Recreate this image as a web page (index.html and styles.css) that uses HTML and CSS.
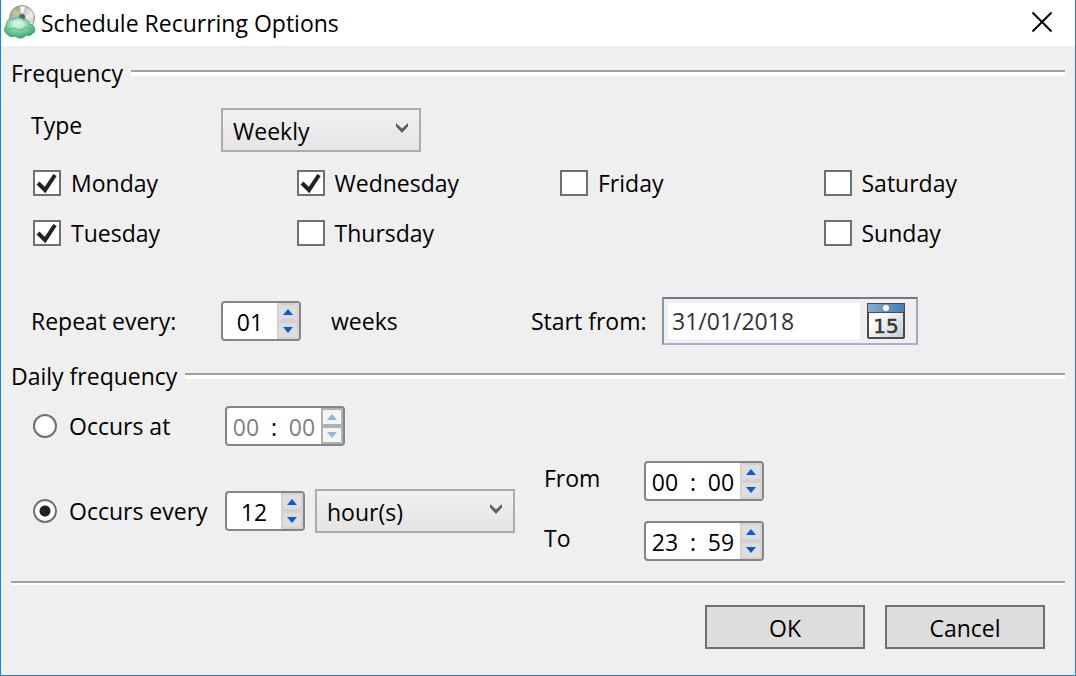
FILE: index.html
```html
<!DOCTYPE html>
<html lang="en">
<head>
<meta charset="utf-8">
<title>Schedule Recurring Options</title>
<link rel="stylesheet" href="styles.css">
</head>
<body>
<form class="dialog">
  <header class="titlebar">
    <svg class="app-icon" width="32" height="34" viewBox="0 0 32 34" aria-hidden="true">
      <defs>
        <linearGradient id="disc" x1="0" y1="0" x2="1" y2="1">
          <stop offset="0" stop-color="#858585"/><stop offset=".35" stop-color="#bcbcbc"/>
          <stop offset=".6" stop-color="#ededed"/><stop offset="1" stop-color="#a8a8a8"/>
        </linearGradient>
        <radialGradient id="cloud" cx=".45" cy=".3" r=".75">
          <stop offset="0" stop-color="#c9f3da"/><stop offset=".5" stop-color="#7fd0a3"/>
          <stop offset="1" stop-color="#2f9a63"/>
        </radialGradient>
      </defs>
      <circle cx="18" cy="13" r="12.500" fill="url(#disc)" stroke="#9a9a9a"/>
      <path d="M18 13 8 8l3-4z" fill="#a0dc74"/>
      <path d="M18 13 16 1.500h5z" fill="#f4f4f4"/>
      <path d="m18 13 11 5-2 4z" fill="#e9dfe0"/>
      <circle cx="18" cy="12" r="3.500" fill="#5c5c5c" stroke="#bbb"/>
      <path d="M5 30C0 29-.5 23 2 21c0-5 3-8 7-7 3-2 8-2 11 1 4-1 6 2 5 5 6-2 8 7 3 9-2 2-4 2-6 1-2 4-8 4-11 1-2 1-4 1-6 0z" fill="url(#cloud)" stroke="#4bab78"/>
      <ellipse cx="14" cy="19" rx="7" ry="4" fill="#d9f8e6" opacity=".6"/>
      <path d="M2 22c3 3 6 3 8 1 3 3 9 3 12-1 2 2 5 2 7 0" fill="none" stroke="#49a876" opacity=".7"/>
    </svg>
    <h1 class="title">Schedule Recurring Options</h1>
    <button class="close" type="button" aria-label="Close">
      <svg width="22" height="22" viewBox="0 0 22 22"><path d="m1.500 1.500 19 19m0-19-19 19" fill="none" stroke="#000" stroke-width="2"/></svg>
    </button>
  </header>

  <main class="content">
    <section aria-labelledby="frequency">
      <h2 class="heading" id="frequency">Frequency</h2>
      <div class="type-row">
        <label class="type-label" for="type">Type</label>
        <span class="dropdown">
          <select id="type"><option>Weekly</option><option>Daily</option><option>Monthly</option></select>
          <svg class="chevron" width="12" height="10" viewBox="0 0 12 10"><path d="M0 0l6 5.500L12 0v3.500L6 10 0 3.500z" fill="#606060"/></svg>
        </span>
      </div>
      <div class="days">
        <label class="day"><input type="checkbox" checked>Monday</label>
        <label class="day"><input type="checkbox" checked>Wednesday</label>
        <label class="day"><input type="checkbox">Friday</label>
        <label class="day"><input type="checkbox">Saturday</label>
        <label class="day"><input type="checkbox" checked>Tuesday</label>
        <label class="day"><input type="checkbox">Thursday</label>
        <label class="day sunday"><input type="checkbox">Sunday</label>
      </div>
      <div class="repeat-row">
        <label for="repeat">Repeat every:</label>
        <span class="spinner">
          <input class="number" id="repeat" value="01">
          <span class="steps">
            <button type="button" aria-label="Increase weeks"><svg width="10" height="6" viewBox="0 0 10 6"><path d="M0 6 5 0l5 6z"/></svg></button>
            <button type="button" aria-label="Decrease weeks"><svg width="10" height="6" viewBox="0 0 10 6"><path d="M0 0h10L5 6z"/></svg></button>
          </span>
        </span>
        <span>weeks</span>
        <label for="start">Start from:</label>
        <span class="date">
          <input id="start" value="31/01/2018">
          <button type="button" aria-label="Open calendar">
            <svg width="38" height="36" viewBox="0 0 38 36">
              <defs>
                <linearGradient id="sheet" x1="0" y1="0" x2="1" y2="1"><stop offset=".3" stop-color="#fff"/><stop offset="1" stop-color="#c5cacf"/></linearGradient>
                <linearGradient id="band"><stop offset="0" stop-color="#84add3"/><stop offset="1" stop-color="#427fb8"/></linearGradient>
              </defs>
              <rect x="1" y="1" width="36" height="34" rx="1" fill="url(#sheet)" stroke="#4b4b4b" stroke-width="2"/>
              <path d="M1 1h36v8H1z" fill="url(#band)"/>
              <path d="M0 .5h38M1 9.500h36" stroke="#4b4b4b"/>
              <circle cx="19" cy="5" r="3" fill="#fff"/>
              <text class="calendar-day" x="19" y="30" text-anchor="middle">15</text>
            </svg>
          </button>
        </span>
      </div>
    </section>

    <section aria-labelledby="daily">
      <h2 class="heading" id="daily">Daily frequency</h2>
      <div class="daily">
        <div class="occurs">
          <div class="occurs-row">
            <label class="choice"><input type="radio" name="occurs">Occurs at</label>
            <span class="spinner disabled">
              <input class="part" aria-label="Hour" value="00" disabled><span class="colon">:</span><input class="part" aria-label="Minute" value="00" disabled>
              <span class="steps">
                <button type="button" aria-label="Later" disabled><svg width="10" height="6" viewBox="0 0 10 6"><path d="M0 6 5 0l5 6z"/></svg></button>
                <button type="button" aria-label="Earlier" disabled><svg width="10" height="6" viewBox="0 0 10 6"><path d="M0 0h10L5 6z"/></svg></button>
              </span>
            </span>
          </div>
          <div class="occurs-row">
            <label class="choice"><input type="radio" name="occurs" checked>Occurs every</label>
            <span class="spinner">
              <input class="number" aria-label="Interval" value="12">
              <span class="steps">
                <button type="button" aria-label="Increase interval"><svg width="10" height="6" viewBox="0 0 10 6"><path d="M0 6 5 0l5 6z"/></svg></button>
                <button type="button" aria-label="Decrease interval"><svg width="10" height="6" viewBox="0 0 10 6"><path d="M0 0h10L5 6z"/></svg></button>
              </span>
            </span>
            <span class="dropdown unit">
              <select aria-label="Unit"><option>hour(s)</option><option>minute(s)</option></select>
              <svg class="chevron" width="12" height="10" viewBox="0 0 12 10"><path d="M0 0l6 5.500L12 0v3.500L6 10 0 3.500z" fill="#606060"/></svg>
            </span>
          </div>
        </div>
        <div class="range">
          <label class="range-label" for="from">From</label>
          <span class="spinner">
            <input class="part" id="from" value="00"><span class="colon">:</span><input class="part" aria-label="From minute" value="00">
            <span class="steps">
              <button type="button" aria-label="From later"><svg width="10" height="6" viewBox="0 0 10 6"><path d="M0 6 5 0l5 6z"/></svg></button>
              <button type="button" aria-label="From earlier"><svg width="10" height="6" viewBox="0 0 10 6"><path d="M0 0h10L5 6z"/></svg></button>
            </span>
          </span>
          <label class="range-label" for="to">To</label>
          <span class="spinner">
            <input class="part" id="to" value="23"><span class="colon">:</span><input class="part" aria-label="To minute" value="59">
            <span class="steps">
              <button type="button" aria-label="To later"><svg width="10" height="6" viewBox="0 0 10 6"><path d="M0 6 5 0l5 6z"/></svg></button>
              <button type="button" aria-label="To earlier"><svg width="10" height="6" viewBox="0 0 10 6"><path d="M0 0h10L5 6z"/></svg></button>
            </span>
          </span>
        </div>
      </div>
    </section>

    <footer class="actions">
      <button class="action" type="button">OK</button>
      <button class="action" type="button">Cancel</button>
    </footer>
  </main>
</form>
</body>
</html>
```
FILE: styles.css
```css
* {
  box-sizing: border-box;
}

body {
  margin: 0;
  color: #000;
  font: 23px/32px "Open Sans", "Noto Sans", sans-serif;
}

button,
input,
select {
  margin: 0;
  padding: 0;
  border: 0;
  border-radius: 0;
  appearance: none;
  color: inherit;
  font: inherit;
}

svg {
  display: block;
}

.dialog {
  min-height: 100vh;
  border: 1px solid #1883d7;
  border-top: 0;
  background: #efefef;
}

.titlebar {
  display: flex;
  align-items: center;
  gap: 5px;
  height: 46px;
  padding: 0 22px 2px 3px;
  background: #fff;
}

.title {
  flex: 1;
  margin: 0;
  padding-top: 2px;
  font-size: 23px;
  font-weight: 400;
}

.close {
  background: none;
}

.content {
  padding: 11px 10px 0;
}

.heading {
  display: flex;
  align-items: center;
  gap: 8px;
  margin: 0;
  font-size: 23px;
  font-weight: 400;
}

.heading::after {
  flex: 1;
  height: 4px;
  border-top: 2px solid #a0a0a0;
  background: #fff;
  content: "";
}

.type-row {
  display: flex;
  align-items: flex-start;
  padding: 19px 0 6px 20px;
}

.type-label {
  width: 190px;
  line-height: 34px;
}

.dropdown {
  position: relative;
  width: 200px;
  height: 44px;
}

.dropdown select {
  width: 100%;
  height: 100%;
  padding: 2px 0 0 10px;
  border: 2px solid #acacac;
  background: linear-gradient(#f0f0f0, #e5e5e5);
}

.chevron {
  position: absolute;
  top: 15px;
  right: 13px;
  pointer-events: none;
}

.days {
  display: grid;
  grid-template-columns: repeat(4, 1fr);
  grid-auto-rows: 50px;
}

.day {
  display: flex;
  align-items: center;
  gap: 10px;
  padding-left: 22px;
}

.sunday {
  grid-column: 4;
}

.day input {
  width: 28px;
  height: 26px;
  border: 2px solid #707070;
  background: #fff;
}

.day input:checked {
  background: #fff url("data:image/svg+xml,%3Csvg xmlns='http://www.w3.org/2000/svg' viewBox='0 0 24 22'%3E%3Cpath d='M3 11l7 7L20 3' fill='none' stroke='%23212121' stroke-width='4'/%3E%3C/svg%3E") center / 24px 22px no-repeat;
}

.repeat-row {
  display: grid;
  grid-template-columns: 190px 110px 200px 131px 1fr;
  align-items: center;
  padding: 39px 0 15px 20px;
}

.spinner {
  display: flex;
  align-items: center;
  width: 80px;
  height: 40px;
  border: 2px solid #858585;
  border-radius: 4px;
  background: #fff;
  overflow: hidden;
}

.number {
  flex: 1;
  min-width: 0;
  padding-top: 2px;
  background: none;
  text-align: center;
}

.part {
  width: 38px;
  padding-top: 2px;
  background: none;
  text-align: center;
}

.colon {
  flex: 1;
  padding-top: 2px;
  text-align: center;
}

.steps {
  display: grid;
  gap: 4px;
  width: 22px;
  height: 100%;
  padding: 2px;
  background: #d2d2d2;
}

.steps button {
  display: grid;
  place-items: center;
  background: #dedede;
}

.steps path {
  fill: #0a5ae0;
}

.disabled input {
  color: #808080;
}

.disabled .steps {
  background: #adb2b5;
}

.disabled .steps button {
  background: #f4f4f4;
}

.disabled .steps path {
  fill: #95b3e4;
}

.date {
  display: flex;
  align-items: center;
  gap: 7px;
  width: 256px;
  height: 48px;
  padding-left: 4px;
  border: 2px solid;
  border-color: #687b8b #9aabba #a5b5c2 #8798a7;
}

.date input {
  width: 192px;
  height: 36px;
  padding-left: 4px;
  background: #fff;
  color: #333;
}

.date button {
  background: none;
}

.calendar-day {
  fill: #333;
  stroke: #333;
  stroke-width: 0.5px;
  font: 20px "DejaVu Sans", sans-serif;
}

.daily {
  display: flex;
  gap: 29px;
  padding-bottom: 20px;
}

.occurs {
  display: grid;
  gap: 43px;
  align-content: start;
  padding: 14px 0 0 22px;
}

.occurs-row {
  display: flex;
  align-items: center;
}

.choice {
  display: flex;
  align-items: center;
  gap: 12px;
  width: 192px;
}

.choice input {
  width: 24px;
  height: 24px;
  border: 2px solid #707070;
  border-radius: 50%;
  background: #fff;
}

.choice input:checked {
  background: radial-gradient(circle, #212121 5px, #fff 6px);
}

.unit {
  margin-left: 10px;
}

.range {
  display: grid;
  grid-template-columns: 100px 120px;
  gap: 20px 0;
  padding-top: 69px;
}

.range-label {
  line-height: 34px;
}

.range .spinner,
.disabled {
  width: 120px;
}

.actions {
  display: flex;
  justify-content: flex-end;
  gap: 20px;
  padding: 22px 20px 26px 0;
  border-top: 2px solid #a0a0a0;
  box-shadow: inset 0 2px #fff;
}

.action {
  width: 160px;
  height: 44px;
  padding-top: 2px;
  border: 2px solid #707070;
  background: #ddd;
}
```
